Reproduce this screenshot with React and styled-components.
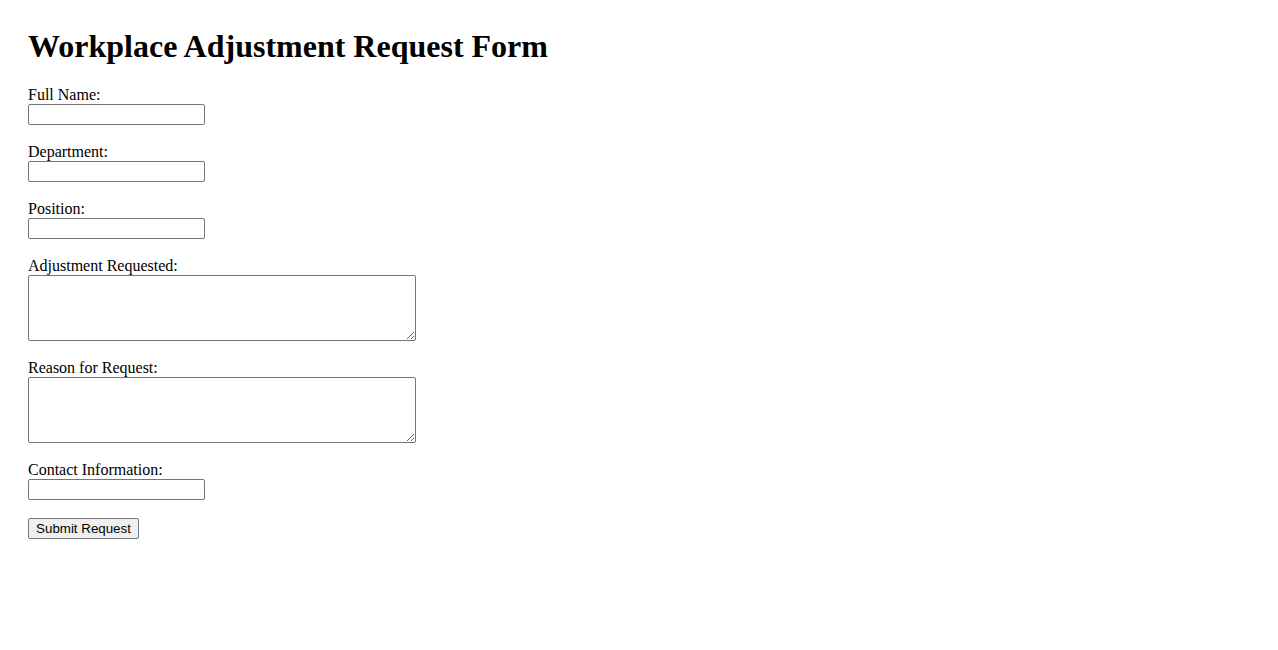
import React from 'react'
import styled, { createGlobalStyle } from 'styled-components'

const GlobalStyle = createGlobalStyle`
  body {
    margin: 8px;
    padding: 20px;
    background: #fff;
    color: #000;
    font-family: "Liberation Serif", "Times New Roman", serif;
    font-size: 16px;
  }
`;

const Title = styled.h1`
  margin: 0 0 21px 0;
  font-size: 32px;
  line-height: 37px;
  font-weight: bold;
`;

const Form = styled.form`
  display: flex;
  flex-direction: column;
  align-items: flex-start;
`;

const Field = styled.div`
  display: flex;
  flex-direction: column;
  align-items: flex-start;
  margin-bottom: 18px;
`;

const Label = styled.label`
  display: block;
  height: 18px;
  line-height: 18px;
`;

const Input = styled.input`
  box-sizing: border-box;
  width: 177px;
  height: 21px;
  margin: 0;
  padding: 1px 2px;
  border: 1px solid #767676;
  border-radius: 2px;
  background: #fff;
  font-family: "Liberation Sans", Arial, sans-serif;
  font-size: 13.33px;
`;

const TextArea = styled.textarea`
  box-sizing: border-box;
  width: 388px;
  height: 66px;
  margin: 0;
  padding: 2px;
  border: 1px solid #767676;
  border-radius: 2px;
  background: #fff;
  font-family: "Liberation Mono", monospace;
  font-size: 13.33px;
`;

const Button = styled.button`
  box-sizing: border-box;
  height: 21px;
  width: 111px;
  margin: 0;
  padding: 1px 6px;
  border: 1px solid #767676;
  border-radius: 2px;
  background: #efefef;
  color: #000;
  font-family: "Liberation Sans", Arial, sans-serif;
  font-size: 13.33px;
  line-height: 17px;
`;

const fields = [
  { id: 'name', label: 'Full Name:' },
  { id: 'department', label: 'Department:' },
  { id: 'position', label: 'Position:' },
  { id: 'adjustment', label: 'Adjustment Requested:', multiline: true },
  { id: 'reason', label: 'Reason for Request:', multiline: true },
  { id: 'contact', label: 'Contact Information:' },
];

const App = () => {
  return (
    <>
      <GlobalStyle />
      <Title>Workplace Adjustment Request Form</Title>
      <Form onSubmit={e => e.preventDefault()}>
        {fields.map(f => (
          <Field key={f.id}>
            <Label htmlFor={f.id}>{f.label}</Label>
            {f.multiline ? <TextArea id={f.id} /> : <Input id={f.id} type="text" />}
          </Field>
        ))}
        <Button type="submit">Submit Request</Button>
      </Form>
    </>
  )
}

export default App;
